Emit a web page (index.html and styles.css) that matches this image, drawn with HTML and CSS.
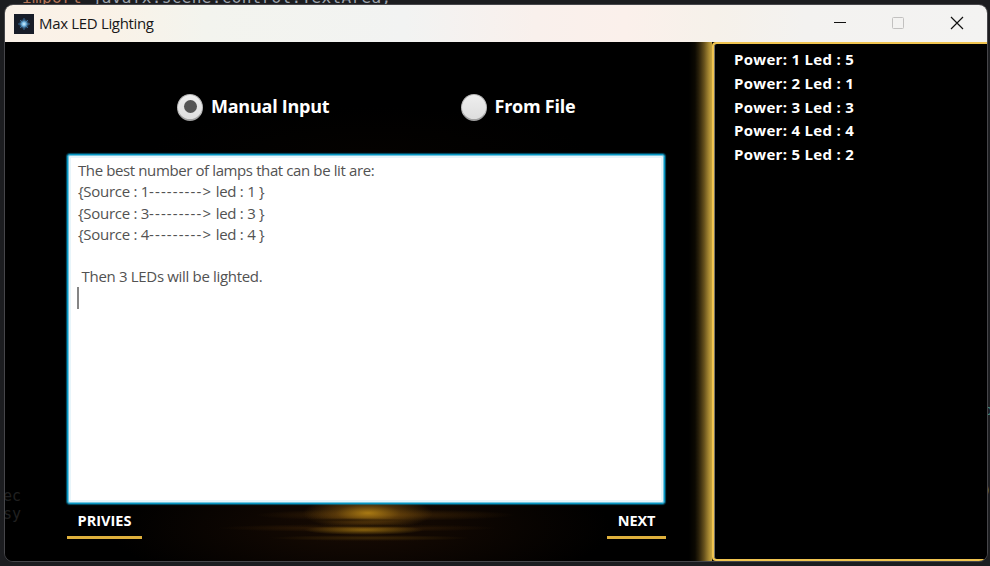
FILE: index.html
```html
<!DOCTYPE html>
<html lang="en">
<head>
<meta charset="utf-8">
<title>Max LED Lighting</title>
<link rel="stylesheet" href="styles.css">
</head>
<body>
<div class="editor-line"><span class="keyword">import</span> javafx.scene.control.TextArea;</div>
<span class="editor-bit bit-one">p</span>
<span class="editor-bit bit-two">)</span>
<main class="window">
  <header class="titlebar">
    <svg class="app-icon" viewBox="0 0 20 20">
      <defs><radialGradient id="spark"><stop offset="0" stop-color="#d9f5ff"/><stop offset=".4" stop-color="#6db1df"/><stop offset="1" stop-color="#255783" stop-opacity="0"/></radialGradient></defs>
      <rect width="20" height="20" fill="#171c28"/>
      <path d="M10 4v12M4 10h12M6 6l8 8M14 6l-8 8" stroke="#3a7aaa" stroke-width="1" opacity=".8"/>
      <circle cx="10" cy="10" r="5.5" fill="url(#spark)"/>
    </svg>
    <h1 class="title">Max LED Lighting</h1>
    <svg class="controls" viewBox="0 0 154 37" fill="none">
      <path d="M0 17.5h12" stroke="#111"/>
      <rect x="58.5" y="12.5" width="11" height="11" rx="1" stroke="#c2c1c0"/>
      <path d="M117 12l12 12M129 12l-12 12" stroke="#111" stroke-width="1.2"/>
    </svg>
  </header>
  <div class="content">
    <section class="workspace">
      <div class="modes">
        <div class="mode mode-manual"><span class="radio selected"></span><span class="mode-label">Manual Input</span></div>
        <div class="mode"><span class="radio"></span><span class="mode-label">From File</span></div>
      </div>
      <div class="output">
        <p class="line first">The best number of lamps that can be lit are:</p>
        <p class="line source">{Source : 1<span class="arrow">---------&gt;</span> led : 1 }</p>
        <p class="line source">{Source : 3<span class="arrow">---------&gt;</span> led : 3 }</p>
        <p class="line source">{Source : 4<span class="arrow">---------&gt;</span> led : 4 }</p>
        <p class="line"></p>
        <p class="line last"> Then 3 LEDs will be lighted.</p>
        <div class="caret"></div>
      </div>
      <nav class="actions">
        <div class="action previous">PRIVIES</div>
        <div class="action next">NEXT</div>
      </nav>
      <div class="behind"><span>ec</span><span>sy</span></div>
    </section>
    <aside class="pairs">
      <p>Power: 1 Led : 5</p>
      <p>Power: 2 Led : 1</p>
      <p>Power: 3 Led : 3</p>
      <p>Power: 4 Led : 4</p>
      <p>Power: 5 Led : 2</p>
    </aside>
  </div>
</main>
</body>
</html>
```
FILE: styles.css
```css
* { box-sizing: border-box; }
body { margin: 0; width: 990px; height: 566px; overflow: hidden; position: relative; background: #1c1d20; font-family: "Open Sans", "Noto Sans", sans-serif; }
h1, p { margin: 0; }
.editor-line { position: absolute; left: 22px; top: -12px; font: 16px/20px "DejaVu Sans Mono", monospace; letter-spacing: .35px; color: #9da3ad; white-space: pre; }
.keyword { color: #b67558; }
.editor-bit { position: absolute; font: 14px/16px "DejaVu Sans Mono", monospace; }
.bit-one { left: 984px; top: 402px; color: #438077; }
.bit-two { left: 983px; top: 482px; color: #637e43; }
.window { position: relative; margin: 4px 0 0 4px; width: 984px; height: 558px; border: 1px solid #46464a; border-radius: 9px; overflow: hidden; background: #000; }
.titlebar { height: 37px; display: flex; align-items: center; padding-left: 9px; background: linear-gradient(90deg, #faf1e8 0, #faf2e7 100px, #f3f4ee 200px, #f2f3f2 400px, #f9f0ec 530px, #fbf0eb 620px, #f6f1ea 710px, #f3f2f0 800px, #f3f3f2 982px); }
.app-icon { width: 20px; height: 20px; }
.title { margin: -1px 0 0 5px; font-size: 15px; line-height: 20px; font-weight: 400; letter-spacing: -.33px; color: #181818; white-space: nowrap; }
.controls { width: 154px; height: 37px; margin-left: auto; margin-right: -1px; }
.content { display: flex; height: 519px; }
.workspace { position: relative; width: 707px; padding: 50px 47px 0 62px; background:
  linear-gradient(90deg, transparent 684px, #0c0902 690px, #2c220b 694px, #65501c 699px, #a98a33 704px, #c9a640 707px),
  radial-gradient(ellipse 100px 2px at 370px 484px, rgba(15,7,0,.75), transparent),
  radial-gradient(ellipse 70px 2px at 340px 478px, rgba(20,9,0,.6), transparent),
  radial-gradient(ellipse 65px 17px at 363px 471px, rgba(190,138,22,.85), rgba(130,86,14,.5) 50%, transparent),
  radial-gradient(ellipse 60px 5px at 359px 488px, rgba(165,120,16,.75), transparent),
  radial-gradient(ellipse 130px 6px at 380px 473px, rgba(95,58,8,.55), transparent),
  radial-gradient(ellipse 140px 4px at 352px 486px, rgba(82,48,8,.55), transparent),
  radial-gradient(ellipse 100px 3px at 365px 496px, rgba(82,55,8,.6), transparent),
  radial-gradient(ellipse 250px 70px at 355px 485px, #180b03, transparent),
  radial-gradient(ellipse 220px 45px at 365px 110px, #040200, transparent), #000; }
.modes { display: flex; height: 30px; padding-left: 110px; align-items: center; }
.mode { display: flex; align-items: center; }
.mode-manual { width: 283.5px; }
.radio { width: 26px; height: 27px; flex: none; border-radius: 50%; display: grid; place-items: center; background: linear-gradient(#eee, #dedede); border: 1px solid #b9b9b9; border-bottom: 2px solid #a1a1a1; }
.selected::after { content: ""; width: 13px; height: 13px; border-radius: 50%; background: #555; }
.mode-label { margin: -2px 0 0 8px; font-size: 18px; line-height: 26px; font-weight: 700; letter-spacing: -.25px; color: #fff; white-space: nowrap; }
.output { margin-top: 32px; width: 598px; height: 350px; padding: 5px 9px 0 10px; background: #fff; border: 1px solid #0796c2; border-radius: 3px; box-shadow: inset 0 0 0 1px #73c5df, inset 0 0 0 3px #e8f5fa, 0 0 1px 1px rgba(7,150,194,.55); color: #525252; }
.line { height: 21.3px; font-size: 15px; line-height: 21.3px; white-space: pre; letter-spacing: -.3px; }
.first { letter-spacing: -.39px; }
.source { letter-spacing: -.28px; }
.arrow { letter-spacing: 1.1px; }
.last { letter-spacing: -.32px; }
.caret { width: 2px; height: 22px; margin: -1px 0 0 -1px; background: #858585; }
.actions { display: flex; justify-content: space-between; height: 36px; width: 599px; }
.action { height: 35px; border-bottom: 3px solid #dfb03c; text-align: center; color: #fff; font-size: 14.5px; line-height: 34px; font-weight: 700; }
.previous { width: 75px; letter-spacing: 0; }
.next { width: 59px; letter-spacing: -.1px; }
.behind { position: absolute; left: -2px; top: 445px; display: flex; flex-direction: column; font: 15px/18px "DejaVu Sans Mono", monospace; color: #202020; }
.pairs { width: 275px; height: 519px; padding: 4px 0 0 20px; border: solid #f0c450; border-width: 2px 0 2px 2px; border-radius: 4px 0 0 4px; background: #000; box-shadow: inset 1px 0 #77736a; }
.pairs p { height: 23.8px; font-size: 15px; line-height: 23.6px; font-weight: 700; letter-spacing: .3px; color: #fff; white-space: nowrap; }
```
